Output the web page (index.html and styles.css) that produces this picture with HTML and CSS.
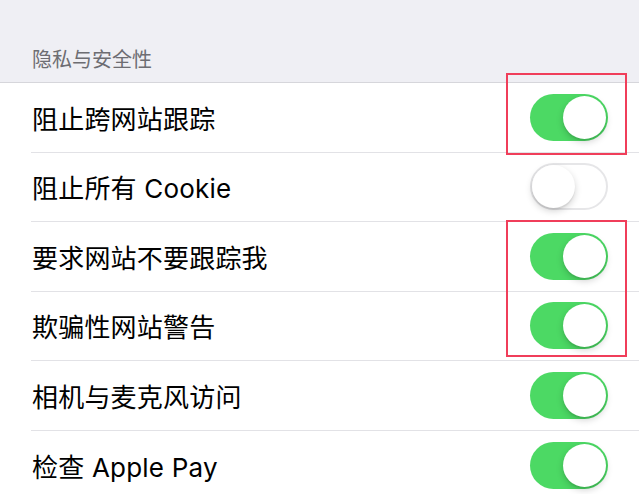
FILE: index.html
```html
<!DOCTYPE html>
<html lang="zh-CN">
<head>
<meta charset="utf-8">
<link rel="stylesheet" href="styles.css">
</head>
<body>
<div class="page">
  <div class="section-header">隐私与安全性</div>
  <div class="list">
    <div class="row"><div class="row-inner"><span class="label">阻止跨网站跟踪</span><span class="switch on"><span class="knob"></span></span></div></div>
    <div class="row"><div class="row-inner"><span class="label">阻止所有 Cookie</span><span class="switch off"><span class="knob"></span></span></div></div>
    <div class="row"><div class="row-inner"><span class="label">要求网站不要跟踪我</span><span class="switch on"><span class="knob"></span></span></div></div>
    <div class="row"><div class="row-inner"><span class="label">欺骗性网站警告</span><span class="switch on"><span class="knob"></span></span></div></div>
    <div class="row"><div class="row-inner"><span class="label">相机与麦克风访问</span><span class="switch on"><span class="knob"></span></span></div></div>
    <div class="row"><div class="row-inner"><span class="label">检查 Apple Pay</span><span class="switch on"><span class="knob"></span></span></div></div>
  </div>
  <div class="highlight highlight-one"></div>
  <div class="highlight highlight-two"></div>
</div>
</body>
</html>
```
FILE: styles.css
```css
html, body {
  margin: 0;
  padding: 0;
  background: #ffffff;
}
.page {
  position: relative;
  width: 639px;
  font-family: Inter, "Noto Sans CJK SC", sans-serif;
}
.section-header {
  height: 82px;
  box-sizing: border-box;
  background: #efeff4;
  color: #6d6d72;
  font-size: 20px;
  padding: 46px 0 0 32px;
  line-height: 28px;
}
.list {
  border-top: 1px solid #d6d6db;
  background: #fff;
}
.row {
  padding-left: 31px;
}
.row-inner {
  height: 69.5px;
  box-sizing: border-box;
  border-bottom: 1px solid #e2e2e6;
  display: flex;
  align-items: center;
  justify-content: space-between;
  padding: 0 31px 0 1px;
}
.row:last-child .row-inner {
  border-bottom: none;
}
.label {
  font-size: 26px;
  color: #000;
  letter-spacing: 0.2px;
}
.switch {
  position: relative;
  width: 78px;
  height: 47px;
  border-radius: 24px;
  box-sizing: border-box;
  display: block;
}
.switch.on {
  background: #4cd964;
}
.switch.off {
  background: #fff;
  border: 2px solid #e6e6e8;
}
.knob {
  position: absolute;
  top: 2px;
  width: 43px;
  height: 43px;
  border-radius: 50%;
  background: #fff;
  box-shadow: 0 3px 7px rgba(0,0,0,0.18), 0 2px 1px rgba(0,0,0,0.06);
}
.switch.on .knob {
  right: 2px;
}
.switch.off .knob {
  top: 0;
  left: 0;
}
.highlight {
  position: absolute;
  left: 506px;
  width: 121px;
  border: 2px solid #f03e5a;
  box-sizing: border-box;
}
.highlight-one {
  top: 73px;
  height: 82px;
}
.highlight-two {
  top: 220px;
  height: 137px;
}
```
